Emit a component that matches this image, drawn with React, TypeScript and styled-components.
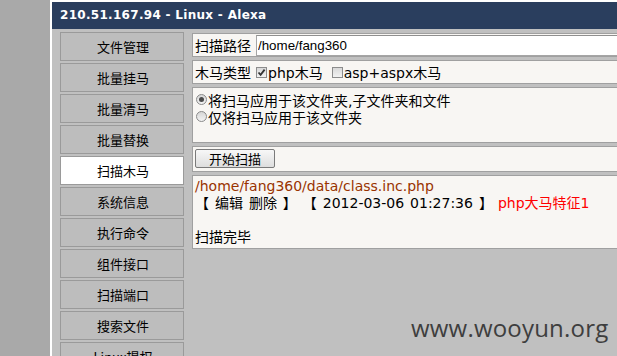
import React from 'react'
import styled, { createGlobalStyle } from 'styled-components'

const GlobalStyle = createGlobalStyle`
  html, body {
    margin: 0;
    padding: 0;
    height: 100%;
    overflow: hidden;
    background: #a9a9a9;
  }
  body {
    font-family: "DejaVu Sans", "Noto Sans CJK SC", sans-serif;
    color: #000;
  }
`

const Page = styled.div`
  position: relative;
  height: 356px;
  padding-left: 50px;
  overflow: hidden;
`

const Frame = styled.div`
  height: 354px;
  border-left: 2px solid #fff;
  border-top: 2px solid #fff;
  background: #c0c0c0;
  overflow: hidden;
`

const TitleBar = styled.div`
  height: 27px;
  line-height: 27px;
  padding-left: 8px;
  background: #2a3e5e;
  color: #fff;
  font-family: "DejaVu Sans", sans-serif;
  font-weight: bold;
  font-size: 12px;
  letter-spacing: 0.3px;
`

const Main = styled.div`
  display: flex;
  gap: 8px;
  padding: 3px 0 0 8px;
`

const Sidebar = styled.div`
  display: flex;
  flex-direction: column;
  gap: 2px;
  width: 124px;
  flex-shrink: 0;
`

const NavButton = styled.div<{ $active?: boolean }>`
  box-sizing: border-box;
  height: 29px;
  display: flex;
  align-items: center;
  justify-content: center;
  border: 1px solid #9a9a9a;
  background: ${({ $active }) => ($active ? '#fff' : '#bdbdbd')};
  font-family: "Noto Sans CJK SC", sans-serif;
  font-size: 13px;
  padding-left: 2px;
  flex-shrink: 0;
`

const Content = styled.div`
  flex: 1;
  min-width: 0;
  margin-right: -20px;
  padding-top: 1px;
  display: flex;
  flex-direction: column;
  gap: 3px;
`

const Row = styled.div<{ $h: number }>`
  box-sizing: border-box;
  height: ${({ $h }) => $h}px;
  border: 1px solid #a0a0a0;
  background: #f8f6f3;
  padding: 0 2px;
  font-size: 14px;
`

const FieldRow = styled(Row)`
  display: flex;
  align-items: center;
  white-space: nowrap;
`

const PathInput = styled.input`
  box-sizing: border-box;
  margin-left: 5px;
  height: 21px;
  width: 600px;
  border: 1px solid #a5a5a5;
  border-top-color: #8f8f8f;
  padding: 0 1px;
  background: #fff;
  font-family: "Liberation Sans", Arial, sans-serif;
  font-size: 13.33px;
  color: #000;
  outline: none;
`

const Check = styled.span<{ $checked?: boolean }>`
  box-sizing: border-box;
  display: inline-flex;
  align-items: center;
  justify-content: center;
  width: 11px;
  height: 11px;
  margin: 0 1px 0 5px;
  border: 1px solid #8c8c8c;
  background: linear-gradient(#d9d9d9, #f2f2f2);
`

const OptionLabel = styled.span`
  margin-right: 4px;
`

const RadioList = styled(Row)`
  padding-top: 3px;
`

const RadioLine = styled.div`
  display: flex;
  align-items: center;
  height: 17px;
  white-space: nowrap;
`

const Radio = styled.span<{ $checked?: boolean }>`
  box-sizing: border-box;
  display: inline-flex;
  align-items: center;
  justify-content: center;
  width: 11px;
  height: 11px;
  margin: 0 1px 0 1px;
  border-radius: 50%;
  border: 1px solid #8a8a8a;
  background: linear-gradient(#d6d6d6, #f3f3f3);

  &::after {
    content: '';
    display: ${({ $checked }) => ($checked ? 'block' : 'none')};
    width: 5px;
    height: 5px;
    border-radius: 50%;
    background: #4a4a4a;
  }
`

const ButtonRow = styled(Row)`
  padding: 2px;
`

const ScanButton = styled.button`
  box-sizing: border-box;
  width: 80px;
  height: 19px;
  padding: 0;
  border: 1px solid #7a7a7a;
  border-radius: 2px;
  background: linear-gradient(#f7f7f7, #dedede);
  font-family: "Noto Sans CJK SC", sans-serif;
  font-size: 13px;
  line-height: 17px;
  color: #000;
`

const ResultBox = styled(Row)`
  padding: 2px 2px;
  line-height: 17px;
  white-space: nowrap;
`

const ResultLine = styled.div<{ $color?: string; $spaced?: boolean }>`
  height: 17px;
  color: ${({ $color }) => $color || '#000'};
  word-spacing: ${({ $spaced }) => ($spaced ? '1.5px' : 'normal')};
`

const Hit = styled.span`
  color: #ff0000;
  margin-left: 5px;
`

const Watermark = styled.div`
  position: absolute;
  left: 411px;
  top: 311px;
  font-family: "Open Sans", sans-serif;
  font-size: 24px;
  color: #3e3e3e;
  letter-spacing: 0.2px;
`

const CheckMark = () => (
  <svg width="9" height="9" viewBox="0 0 9 9">
    <path d="M1.5 4.5 L3.6 6.8 L7.6 1.6" fill="none" stroke="#333" strokeWidth="1.8" />
  </svg>
)

const navItems = [
  '文件管理',
  '批量挂马',
  '批量清马',
  '批量替换',
  '扫描木马',
  '系统信息',
  '执行命令',
  '组件接口',
  '扫描端口',
  '搜索文件',
  'Linux提权',
]

export default function App() {
  return (
    <>
      <GlobalStyle />
      <Page>
        <Frame>
          <TitleBar>210.51.167.94 - Linux - Alexa</TitleBar>
          <Main>
            <Sidebar>
              {navItems.map(item => (
                <NavButton key={item} $active={item === '扫描木马'}>
                  {item}
                </NavButton>
              ))}
            </Sidebar>
            <Content>
              <FieldRow $h={24}>
                扫描路径
                <PathInput readOnly defaultValue="/home/fang360" />
              </FieldRow>
              <FieldRow $h={24}>
                木马类型
                <Check $checked>
                  <CheckMark />
                </Check>
                <OptionLabel>php木马</OptionLabel>
                <Check />
                <OptionLabel>asp+aspx木马</OptionLabel>
              </FieldRow>
              <RadioList $h={56}>
                <RadioLine>
                  <Radio $checked />
                  将扫马应用于该文件夹,子文件夹和文件
                </RadioLine>
                <RadioLine>
                  <Radio />
                  仅将扫马应用于该文件夹
                </RadioLine>
              </RadioList>
              <ButtonRow $h={26}>
                <ScanButton>开始扫描</ScanButton>
              </ButtonRow>
              <ResultBox $h={74}>
                <ResultLine $color="#993300">/home/fang360/data/class.inc.php</ResultLine>
                <ResultLine $spaced>
                  【 编辑 删除 】 【 2012-03-06 01:27:36 】<Hit>php大马特征1</Hit>
                </ResultLine>
                <ResultLine />
                <ResultLine>扫描完毕</ResultLine>
              </ResultBox>
            </Content>
          </Main>
        </Frame>
        <Watermark>www.wooyun.org</Watermark>
      </Page>
    </>
  )
}
